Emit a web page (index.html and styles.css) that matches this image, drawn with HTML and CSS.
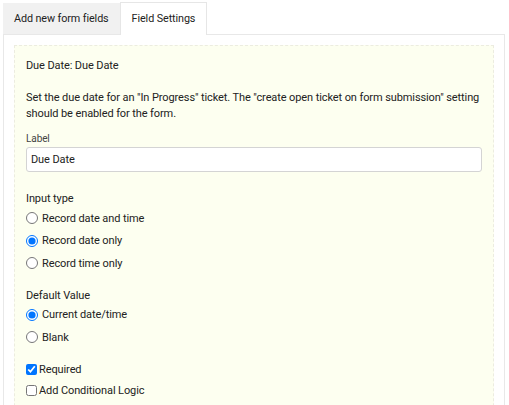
FILE: index.html
```html
<!DOCTYPE html>
<html lang="en">
<head>
  <meta charset="UTF-8">
  <title>Field Settings</title>
  <meta name="viewport" content="width=device-width, initial-scale=1.0">
  <link rel="stylesheet" href="styles.css">
</head>
<body>
  <div class="wrap">
    <div class="tabs">
      <div class="tab">Add new form fields</div>
      <div class="tab active">Field Settings</div>
    </div>

    <div class="panel">
      <div class="box">
        <h3 class="title">Due Date: Due Date</h3>

        <p class="desc">Set the due date for an "In Progress" ticket. The "create open ticket on form submission" setting should be enabled for the form.</p>

        <label class="field-label" for="label">Label</label>
        <input type="text" id="label" class="text-input" value="Due Date">

        <div class="group">
          <div class="group-title">Input type</div>
          <label class="radio"><input type="radio" name="type"> Record date and time</label>
          <label class="radio"><input type="radio" name="type" checked> Record date only</label>
          <label class="radio"><input type="radio" name="type"> Record time only</label>
        </div>

        <div class="group">
          <div class="group-title">Default Value</div>
          <label class="radio"><input type="radio" name="def" checked> Current date/time</label>
          <label class="radio"><input type="radio" name="def"> Blank</label>
        </div>

        <div class="checks">
          <label class="check"><input type="checkbox" checked>Required</label>
          <label class="check"><input type="checkbox">Add Conditional Logic</label>
        </div>
      </div>
    </div>
  </div>
</body>
</html>
```

FILE: styles.css
```css
body {
  margin: 0;
  font-family: Roboto, "Liberation Sans", sans-serif;
  font-size: 11px;
  letter-spacing: -0.1px;
  color: #222;
}

.wrap {
  width: 502px;
  padding: 2px 0 0 3px;
}

.tabs {
  display: flex;
  align-items: flex-end;
}

.tab {
  height: 31px;
  line-height: 31px;
  padding: 0 11px;
  background: #f1f1f1;
  font-size: 10.8px;
}

.tab.active {
  height: 32px;
  line-height: 32px;
  background: #fff;
  border: 1px solid #e6e6e6;
  border-bottom: none;
  margin-bottom: -1px;
  position: relative;
}

.panel {
  border: 1px solid #e8e8e8;
  padding: 10px;
  min-height: 400px;
}

.box {
  background: #fdfff0;
  border: 1px dashed #ecece0;
  padding: 12px 11px 12px;
  min-height: 380px;
}

.title {
  margin: 0 0 16px;
  font-size: 11px;
  font-weight: normal;
  line-height: 16px;
}

.desc {
  margin: 0 0 11px;
  line-height: 16px;
}

.field-label {
  display: block;
  font-size: 10px;
  color: #444;
  margin-bottom: 3px;
}

.text-input {
  display: block;
  width: 100%;
  box-sizing: border-box;
  height: 25px;
  padding: 0 4px;
  border: 1px solid #d4d4d4;
  border-radius: 3px;
  font-family: inherit;
  font-size: 11px;
  letter-spacing: -0.1px;
  color: #222;
  background: #fff;
}

.group {
  margin-top: 20px;
}

.group + .group {
  margin-top: 14px;
}

.group-title {
  margin-bottom: 2px;
}

.radio {
  display: flex;
  align-items: center;
  height: 22.5px;
}

.radio input {
  margin: 0 4px 0 0;
  width: 12px;
  height: 12px;
}

.checks {
  margin-top: 10px;
}

.check {
  display: flex;
  align-items: center;
  height: 21px;
}

.check input {
  margin: 0 2px 0 0;
  width: 11px;
  height: 11px;
}
```
